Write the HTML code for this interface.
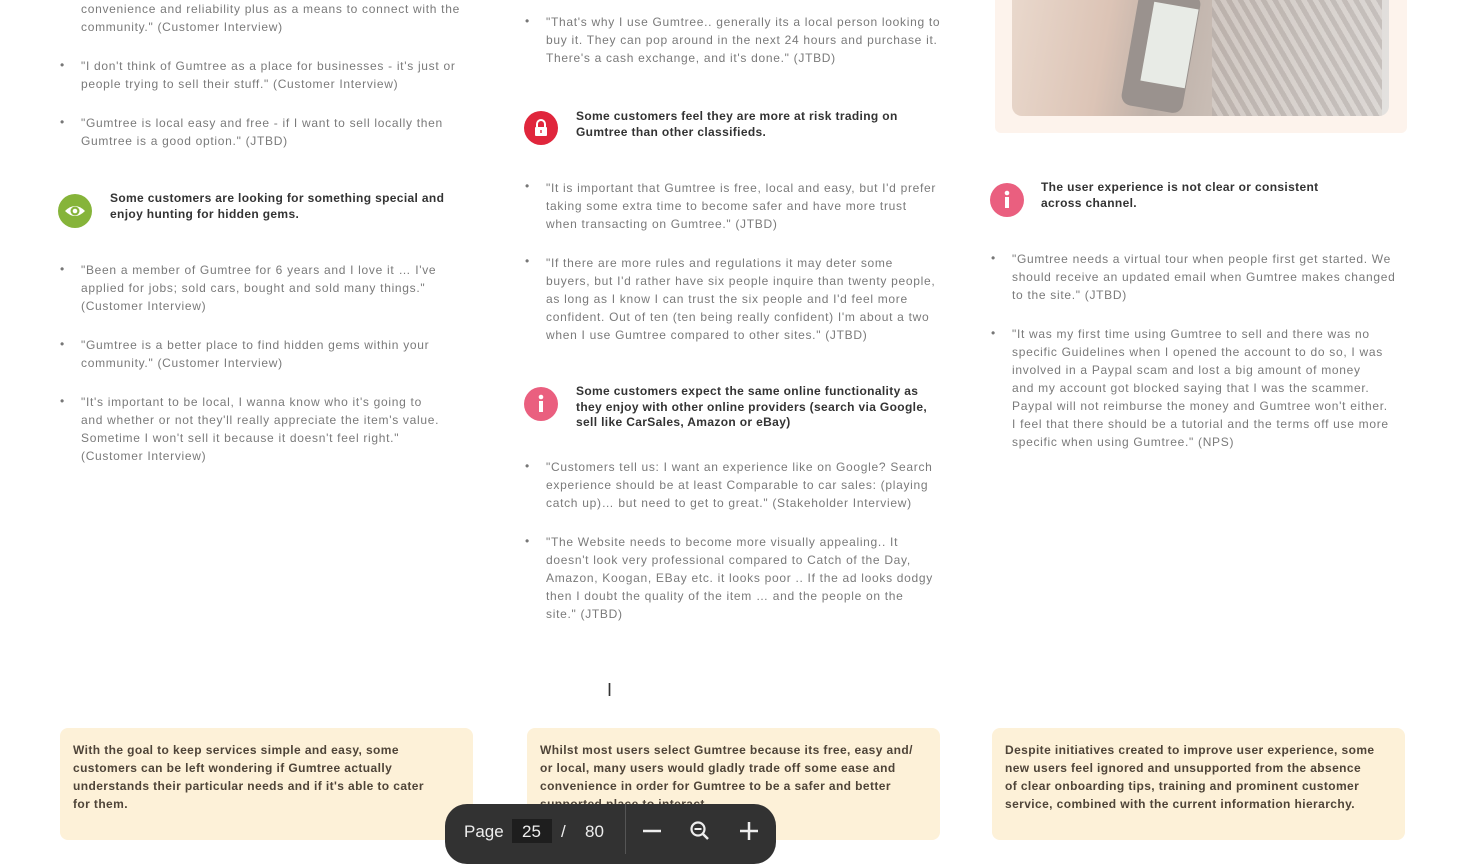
<!DOCTYPE html>
<html><head><meta charset="utf-8"><style>
body{margin:0;width:1457px;height:847px;background:#fff;position:relative;overflow:hidden;font-family:"Liberation Sans",sans-serif;}
.t{position:absolute;font-size:12px;line-height:18px;color:#7a7a7a;white-space:nowrap;letter-spacing:0.7px}
.b{position:absolute;font-size:12px;color:#777}
.h{position:absolute;font-size:12px;line-height:15.5px;color:#333;font-weight:bold;white-space:nowrap;letter-spacing:0.35px}
.ic{position:absolute;width:34px;height:34px;border-radius:50%}
.card{position:absolute;background:#fdf1d8;border-radius:8px;top:728px;height:112px;width:413px}
.ct{position:absolute;font-size:12px;line-height:18px;color:#4e4438;font-weight:bold;white-space:nowrap;letter-spacing:0.4px}
</style></head><body>
<div class="t" style="left:81px;top:0px">convenience and reliability plus as a means to connect with the<br>community." (Customer Interview)</div>
<div class="b" style="left:60px;top:58px">•</div>
<div class="t" style="left:81px;top:57px">"I don't think of Gumtree as a place for businesses - it's just or<br>people trying to sell their stuff." (Customer Interview)</div>
<div class="b" style="left:60px;top:115px">•</div>
<div class="t" style="left:81px;top:114px">"Gumtree is local easy and free - if I want to sell locally then<br>Gumtree is a good option." (JTBD)</div>
<div class="ic" style="left:58px;top:194px;background:#86b43a"><svg width="34" height="34" viewBox="0 0 34 34"><path d="M7 17 Q17 7 27 17 Q17 27 7 17Z" fill="#fff"/><circle cx="17" cy="17" r="4.5" fill="#86b43a"/><circle cx="17" cy="17" r="2.3" fill="#fff"/></svg></div>
<div class="h" style="left:110px;top:191px">Some customers are looking for something special and<br>enjoy hunting for hidden gems.</div>
<div class="b" style="left:60px;top:262px">•</div>
<div class="t" style="left:81px;top:261px">"Been a member of Gumtree for 6 years and I love it … I've<br>applied for jobs; sold cars, bought and sold many things."<br>(Customer Interview)</div>
<div class="b" style="left:60px;top:337px">•</div>
<div class="t" style="left:81px;top:336px">"Gumtree is a better place to find hidden gems within your<br>community." (Customer Interview)</div>
<div class="b" style="left:60px;top:394px">•</div>
<div class="t" style="left:81px;top:393px">"It's important to be local, I wanna know who it's going to<br>and whether or not they'll really appreciate the item's value.<br>Sometime I won't sell it because it doesn't feel right."<br>(Customer Interview)</div>
<div class="b" style="left:525px;top:14px">•</div>
<div class="t" style="left:546px;top:13px">"That's why I use Gumtree.. generally its a local person looking to<br>buy it. They can pop around in the next 24 hours and purchase it.<br>There's a cash exchange, and it's done." (JTBD)</div>
<div class="ic" style="left:524px;top:111px;background:#e0263c"><svg width="34" height="34" viewBox="0 0 34 34"><path d="M13 16 V13 a4 4 0 0 1 8 0 V16" stroke="#fff" stroke-width="2" fill="none"/><rect x="11" y="16" width="12" height="9" rx="1" fill="#fff"/><rect x="16.3" y="19" width="1.4" height="3" fill="#e0263c"/></svg></div>
<div class="h" style="left:576px;top:109px">Some customers feel they are more at risk trading on<br>Gumtree than other classifieds.</div>
<div class="b" style="left:525px;top:179px">•</div>
<div class="t" style="left:546px;top:179px">"It is important that Gumtree is free, local and easy, but I'd prefer<br>taking some extra time to become safer and have more trust<br>when transacting on Gumtree." (JTBD)</div>
<div class="b" style="left:525px;top:254px">•</div>
<div class="t" style="left:546px;top:254px">"If there are more rules and regulations it may deter some<br>buyers, but I'd rather have six people inquire than twenty people,<br>as long as I know I can trust the six people and I'd feel more<br>confident. Out of ten (ten being really confident) I'm about a two<br>when I use Gumtree compared to other sites." (JTBD)</div>
<div class="ic" style="left:524px;top:387px;background:#ea5f7f"><svg width="34" height="34" viewBox="0 0 34 34"><circle cx="17" cy="10" r="2.3" fill="#fff"/><rect x="15" y="14" width="4" height="11" fill="#fff"/></svg></div>
<div class="h" style="left:576px;top:384px">Some customers expect the same online functionality as<br>they enjoy with other online providers (search via Google,<br>sell like CarSales, Amazon or eBay)</div>
<div class="b" style="left:525px;top:459px">•</div>
<div class="t" style="left:546px;top:458px">"Customers tell us: I want an experience like on Google? Search<br>experience should be at least Comparable to car sales: (playing<br>catch up)… but need to get to great." (Stakeholder Interview)</div>
<div class="b" style="left:525px;top:534px">•</div>
<div class="t" style="left:546px;top:533px">"The Website needs to become more visually appealing.. It<br>doesn't look very professional compared to Catch of the Day,<br>Amazon, Koogan, EBay etc. it looks poor .. If the ad looks dodgy<br>then I doubt the quality of the item … and the people on the<br>site." (JTBD)</div>
<div style="position:absolute;left:995px;top:0;width:412px;height:133px;background:#fdf3ec;border-radius:0 0 6px 6px"></div>
<div style="position:absolute;left:1012px;top:0;width:377px;height:116px;border-radius:0 0 10px 10px;overflow:hidden;background:linear-gradient(100deg,#e9d8cc 0%,#dcc4b6 25%,#bdb0a8 40%,#c9bdb5 55%,#d7d1cc 75%,#e4e2e0 100%)">
<div style="position:absolute;left:118px;top:-10px;width:62px;height:120px;background:#9a928e;border-radius:10px;transform:rotate(10deg)"></div>
<div style="position:absolute;left:135px;top:5px;width:45px;height:80px;background:#e8ebe6;transform:rotate(10deg)"></div>
<div style="position:absolute;left:200px;top:0;width:170px;height:116px;background:repeating-linear-gradient(60deg,#b3aba7 0 5px,#d8d2ce 5px 10px);opacity:.6"></div>
</div>
<div class="ic" style="left:990px;top:183px;background:#ea5f7f"><svg width="34" height="34" viewBox="0 0 34 34"><circle cx="17" cy="10" r="2.3" fill="#fff"/><rect x="15" y="14" width="4" height="11" fill="#fff"/></svg></div>
<div class="h" style="left:1041px;top:180px">The user experience is not clear or consistent<br>across channel.</div>
<div class="b" style="left:991px;top:251px">•</div>
<div class="t" style="left:1012px;top:250px">"Gumtree needs a virtual tour when people first get started. We<br>should receive an updated email when Gumtree makes changed<br>to the site." (JTBD)</div>
<div class="b" style="left:991px;top:326px">•</div>
<div class="t" style="left:1012px;top:325px">"It was my first time using Gumtree to sell and there was no<br>specific Guidelines when I opened the account to do so, I was<br>involved in a Paypal scam and lost a big amount of money<br>and my account got blocked saying that I was the scammer.<br>Paypal will not reimburse the money and Gumtree won't either.<br>I feel that there should be a tutorial and the terms off use more<br>specific when using Gumtree." (NPS)</div>
<div style="position:absolute;left:607px;top:680px;font-size:18px;color:#333">I</div>
<div class="card" style="left:60px"></div>
<div class="ct" style="left:73px;top:741px">With the goal to keep services simple and easy, some<br>customers can be left wondering if Gumtree actually<br>understands their particular needs and if it's able to cater<br>for them.</div>
<div class="card" style="left:527px"></div>
<div class="ct" style="left:540px;top:741px">Whilst most users select Gumtree because its free, easy and/<br>or local, many users would gladly trade off some ease and<br>convenience in order for Gumtree to be a safer and better<br>supported place to interact.</div>
<div class="card" style="left:992px"></div>
<div class="ct" style="left:1005px;top:741px">Despite initiatives created to improve user experience, some<br>new users feel ignored and unsupported from the absence<br>of clear onboarding tips, training and prominent customer<br>service, combined with the current information hierarchy.</div>
<div style="position:absolute;left:445px;top:804px;width:331px;height:60px;background:#323232;border-radius:22px;color:#eee;font-size:17px">
<span style="position:absolute;left:19px;top:18px">Page</span>
<span style="position:absolute;left:67px;top:15px;width:40px;height:24px;background:#1e1e1e;"></span>
<span style="position:absolute;left:77px;top:18px">25</span>
<span style="position:absolute;left:116px;top:18px">/</span>
<span style="position:absolute;left:140px;top:18px">80</span>
<span style="position:absolute;left:180px;top:0;width:1px;height:50px;background:#555"></span>
<svg style="position:absolute;left:196px;top:16px" width="120" height="22" viewBox="0 0 120 22"><path d="M2 11 H20" stroke="#eee" stroke-width="2.5"/><circle cx="57" cy="9" r="6.5" stroke="#eee" stroke-width="2.2" fill="none"/><path d="M61.5 13.5 L67 19" stroke="#eee" stroke-width="2.5"/><path d="M53.5 9 H60.5" stroke="#eee" stroke-width="2"/><path d="M99 11 H117 M108 2 V20" stroke="#eee" stroke-width="2.5"/></svg>
</div>
</body></html>
